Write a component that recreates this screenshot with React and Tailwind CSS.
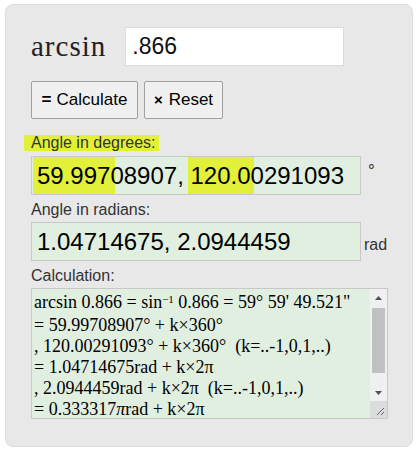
import React from 'react';

const ARIAL = { fontFamily: '"Liberation Sans", Arial, sans-serif' };
const TIMES = { fontFamily: '"Liberation Serif", "Times New Roman", serif' };

export default function App() {
  const lines = [
    <>arcsin 0.866 = sin<sup className="text-[11px] leading-none">−1</sup> 0.866 = 59° 59' 49.521"</>,
    <>= 59.99708907° + k×360°</>,
    <>, 120.00291093° + k×360°&nbsp; (k=..-1,0,1,..)</>,
    <>= 1.04714675rad + k×2π</>,
    <>, 2.0944459rad + k×2π&nbsp; (k=..-1,0,1,..)</>,
    <>= 0.333317<i>π</i>rad + k×2π</>,
  ];

  return (
    <div className="w-[419px] h-[455px] bg-white pt-[4px] pl-[5px]" style={ARIAL}>
      <div className="w-[408px] h-[443px] rounded-lg bg-[#e8e8e8] border border-[#dddddd] pl-[25px]">
        {/* input row */}
        <div className="flex items-center mt-[22px] h-[39px]">
          <span className="text-[29px] text-[#222] tracking-[1px] leading-none" style={TIMES}>
            arcsin
          </span>
          <div className="ml-[19px] w-[219px] h-[39px] bg-white border border-[#dcdcdc] flex items-center pl-[6px] text-[23px] text-[#111]">
            .866
          </div>
        </div>

        {/* buttons */}
        <div className="flex gap-[6px] mt-[15px]">
          <button className="h-[38px] w-[107px] bg-[#f0f0f0] border border-[#a0a0a0] rounded-[2px] text-[17px] text-black flex items-center justify-center">
            <b className="mr-[5px]">=</b>Calculate
          </button>
          <button className="h-[38px] w-[79px] bg-[#f0f0f0] border border-[#a0a0a0] rounded-[2px] text-[17px] text-black flex items-center justify-center">
            <b className="mr-[6px] text-[15px]">×</b>Reset
          </button>
        </div>

        {/* degrees */}
        <div className="mt-[16px] h-[16px] flex">
          <span className="-ml-[7px] pl-[7px] pr-[3px] bg-[#e2f03a] text-[16px] leading-[16px] text-[#333]">
            Angle in degrees:
          </span>
        </div>
        <div className="flex items-center mt-[5px]">
          <div className="w-[330px] h-[39px] bg-[#e0efe0] border border-[#c8c8c8] pl-[1px] text-[24px] leading-[37px] text-black whitespace-nowrap">
            <span className="bg-[#e2f03a] pl-[4px] pr-[5px] -mr-[5px] inline-block">59.997</span>08907, <span className="bg-[#e2f03a] -ml-[2px] pl-[2px] pr-[3px] -mr-[3px] inline-block">120.0</span>0291093
          </div>
          <span className="ml-[7px] -mt-[10px] text-[17px] text-[#333]">°</span>
        </div>

        {/* radians */}
        <div className="mt-[6px] text-[16px] leading-[18px] text-[#333]">Angle in radians:</div>
        <div className="flex items-end mt-[3px]">
          <div className="w-[330px] h-[39px] bg-[#e0efe0] border border-[#c8c8c8] pl-[5px] text-[24px] leading-[37px] text-black">
            1.04714675, 2.0944459
          </div>
          <span className="ml-[3px] mb-[4px] text-[16px] text-[#333]">rad</span>
        </div>

        {/* calculation */}
        <div className="mt-[6px] text-[16px] leading-[18px] text-[#333]">Calculation:</div>
        <div className="mt-[3px] w-[357px] h-[131px] bg-[#e0efe0] border border-[#c8c8c8] flex">
          <div className="flex-1 pl-[2px] pt-[3px] text-[18px] leading-[21px] text-black whitespace-nowrap overflow-hidden" style={TIMES}>
            {lines.map((l, i) => (
              <div key={i} className={i === 0 ? 'h-[23px]' : ''}>{l}</div>
            ))}
          </div>
          <div className="w-[17px] bg-[#f0f0f0] flex flex-col">
            <div className="h-[17px] flex items-center justify-center">
              <svg width="7" height="4" viewBox="0 0 7 4"><path d="M0 4 L3.5 0 L7 4 Z" fill="#505050" /></svg>
            </div>
            <div className="mx-[2px] h-[65px] mt-[2px] bg-[#c1c1c1]" />
            <div className="flex-1" />
            <div className="h-[17px] flex items-center justify-center">
              <svg width="7" height="4" viewBox="0 0 7 4"><path d="M0 0 L3.5 4 L7 0 Z" fill="#505050" /></svg>
            </div>
            <div className="h-[17px] bg-[#dcdcdc] flex items-end justify-end pr-[2px] pb-[2px]">
              <svg width="10" height="10" viewBox="0 0 10 10">
                <path d="M9 2 L2 9 M9 6 L6 9" stroke="#666" strokeWidth="1" />
              </svg>
            </div>
          </div>
        </div>
      </div>
    </div>
  );
}
